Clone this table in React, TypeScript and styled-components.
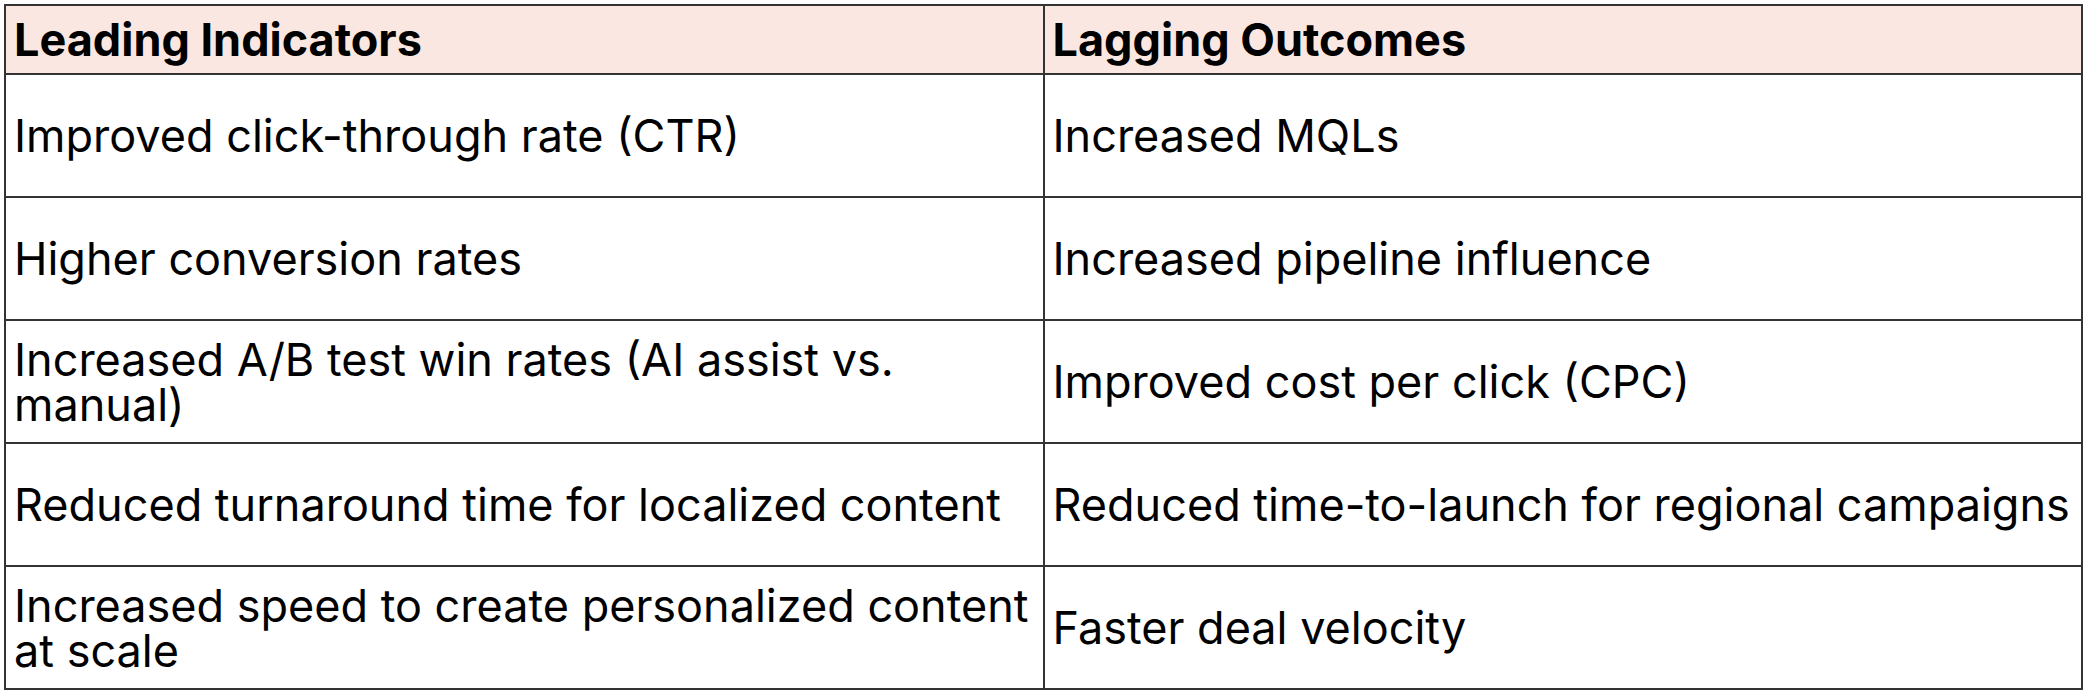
import styled, { createGlobalStyle } from 'styled-components';

const GlobalStyle = createGlobalStyle`
  html, body {
    margin: 0;
    padding: 0;
    background: #ffffff;
  }

  body {
    font-family: Inter, "Liberation Sans", sans-serif;
    color: #000000;
  }
`;

const StyledPage = styled.div`
  width: 2088px;
  height: 694px;
  box-sizing: border-box;
  padding: 4px 5px 6px 4px;
`;

const StyledTable = styled.table`
  width: 100%;
  border-collapse: collapse;
  table-layout: fixed;

  & th,
  & td {
    border: 2px solid #333333;
    padding: 0 8px;
    vertical-align: middle;
    text-align: left;
    font-size: 45px;
    line-height: 45px;
    letter-spacing: 0;
  }

  & th {
    height: 67px;
    padding-top: 0;
    background-color: #fbe7e1;
    font-weight: 700;
  }

  & td {
    height: 121px;
    font-weight: 400;
  }
`;

const rows: [string, string][] = [
  ['Improved click-through rate (CTR)', 'Increased MQLs'],
  ['Higher conversion rates', 'Increased pipeline influence'],
  ['Increased A/B test win rates (AI assist vs. manual)', 'Improved cost per click (CPC)'],
  ['Reduced turnaround time for localized content', 'Reduced time-to-launch for regional campaigns'],
  ['Increased speed to create personalized content at scale', 'Faster deal velocity'],
];

export default function App() {
  return (
    <StyledPage>
      <GlobalStyle />
      <StyledTable>
        <thead>
          <tr>
            <th>Leading Indicators</th>
            <th>Lagging Outcomes</th>
          </tr>
        </thead>
        <tbody>
          {rows.map((row, index) => (
            <tr key={index}>
              <td>{row[0]}</td>
              <td>{row[1]}</td>
            </tr>
          ))}
        </tbody>
      </StyledTable>
    </StyledPage>
  );
}
